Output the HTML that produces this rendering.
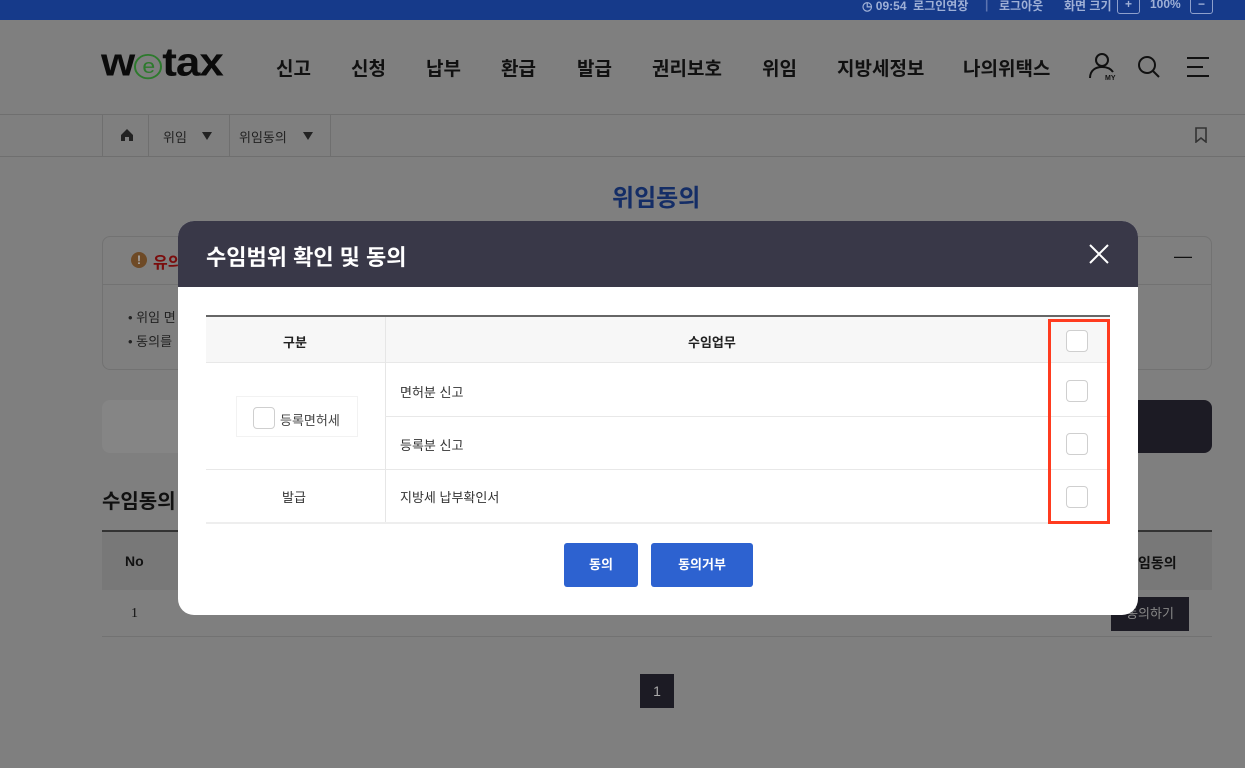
<!DOCTYPE html>
<html><head><meta charset="utf-8"><style>
*{margin:0;padding:0;box-sizing:border-box}
body{width:1245px;height:768px;overflow:hidden;background:#7f7f7f;font-family:"Liberation Sans","Noto Sans CJK KR",sans-serif;position:relative;color:#111}
.a{position:absolute}
.top{left:0;top:0;width:1245px;height:20px;background:#163a8a;color:#9fb0d6;font-size:12px;font-weight:bold}
.nav{font-size:19px;font-weight:bold;color:#111;top:54px}
.cb{position:absolute;width:22px;height:22px;border:1px solid #cfcfcf;border-radius:4px;background:#fff}
</style></head><body>
<div class="a top">
 <span class="a" style="left:862px;top:-3px">◷ 09:54 &nbsp;로그인연장</span>
 <span class="a" style="left:985px;top:-2px;color:#5c74b0">|</span>
 <span class="a" style="left:999px;top:-3px">로그아웃</span>
 <span class="a" style="left:1064px;top:-3px">화면 크기</span>
 <span class="a" style="left:1117px;top:-6px;width:23px;height:20px;border:1px solid #8ea0cc;border-radius:3px;text-align:center;line-height:18px">+</span>
 <span class="a" style="left:1150px;top:-3px">100%</span>
 <span class="a" style="left:1190px;top:-6px;width:23px;height:20px;border:1px solid #8ea0cc;border-radius:3px;text-align:center;line-height:18px">−</span>
</div>
<div class="a" style="left:0;top:114px;width:1245px;height:1px;background:#6f6f6f"></div>
<div class="a" style="left:101px;top:38px;font-size:44px;font-weight:900;letter-spacing:-1px;color:#0b0b0b;transform:scaleY(0.9)">w<span style="display:inline-block;width:28px;height:28px;border:2px solid #2d7a2d;border-radius:50%;color:#2d7a2d;font-size:23px;font-weight:normal;line-height:23px;text-align:center;vertical-align:3px">e</span>tax</div>
<span class="a nav" style="left:276px">신고</span>
<span class="a nav" style="left:351px">신청</span>
<span class="a nav" style="left:426px">납부</span>
<span class="a nav" style="left:501px">환급</span>
<span class="a nav" style="left:577px">발급</span>
<span class="a nav" style="left:652px">권리보호</span>
<span class="a nav" style="left:762px">위임</span>
<span class="a nav" style="left:837px">지방세정보</span>
<span class="a nav" style="left:963px">나의위택스</span>
<svg class="a" style="left:1088px;top:52px" width="32" height="30" fill="none" stroke="#111" stroke-width="2"><circle cx="14" cy="8" r="6"/><path d="M2 26c0-8 6-11 12-11s9 2 11 5"/><text x="17" y="28" font-size="7" fill="#111" stroke="none" font-weight="bold" font-family="Liberation Sans">MY</text></svg>
<svg class="a" style="left:1137px;top:55px" width="26" height="26" fill="none" stroke="#111" stroke-width="2"><circle cx="10" cy="10" r="8"/><path d="M16 16l6 6"/></svg>
<svg class="a" style="left:1186px;top:56px" width="24" height="22" stroke="#111" stroke-width="2"><path d="M1 2h22M1 11h16M1 20h22"/></svg>
<div class="a" style="left:0;top:156px;width:1245px;height:1px;background:#6f6f6f"></div>
<div class="a" style="left:102px;top:115px;width:229px;height:41px;border-left:1px solid #6f6f6f;border-right:1px solid #6f6f6f"></div>
<div class="a" style="left:148px;top:115px;width:1px;height:41px;background:#6f6f6f"></div>
<div class="a" style="left:229px;top:115px;width:1px;height:41px;background:#6f6f6f"></div>
<svg class="a" style="left:120px;top:128px" width="14" height="14"><path d="M7 1L1 7v6h4V9h4v4h4V7z" fill="#222"/></svg>
<span class="a" style="left:163px;top:127px;font-size:13px;color:#222">위임</span><svg class="a" style="left:202px;top:132px" width="10" height="8"><path d="M0 0h10L5 8z" fill="#222"/></svg>
<span class="a" style="left:239px;top:127px;font-size:13px;color:#222">위임동의</span><svg class="a" style="left:303px;top:132px" width="10" height="8"><path d="M0 0h10L5 8z" fill="#222"/></svg>
<svg class="a" style="left:1194px;top:127px" width="14" height="16" fill="none" stroke="#333" stroke-width="1.6"><path d="M2 1h10v14l-5-4-5 4z"/></svg>
<span class="a" style="left:612px;top:178px;font-size:24px;font-weight:bold;color:#142d66">위임동의</span>
<div class="a" style="left:102px;top:236px;width:1110px;height:134px;border:1px solid #727272;border-radius:8px"></div>
<div class="a" style="left:102px;top:284px;width:1110px;height:1px;background:#727272"></div>
<span class="a" style="left:131px;top:252px;width:16px;height:16px;border-radius:50%;background:#6e4a26;color:#aaa;font-size:12px;text-align:center;line-height:16px;font-weight:bold">!</span>
<span class="a" style="left:153px;top:249px;font-size:16px;font-weight:bold;color:#7a0d0d">유의</span>
<span class="a" style="left:1174px;top:246px;font-size:18px;color:#111">—</span>
<span class="a" style="left:128px;top:307px;font-size:13px;color:#222">• 위임 면</span>
<span class="a" style="left:128px;top:331px;font-size:13px;color:#222">• 동의를</span>
<div class="a" style="left:102px;top:400px;width:1110px;height:53px;border-radius:8px;background:linear-gradient(90deg,#858585 0%,#858585 80%,#1c1b24 93%)"></div>
<span class="a" style="left:102px;top:485px;font-size:20px;font-weight:bold;color:#111">수임동의</span>
<div class="a" style="left:102px;top:530px;width:1110px;height:2px;background:#333"></div>
<div class="a" style="left:102px;top:532px;width:1110px;height:58px;background:#787878"></div>
<div class="a" style="left:102px;top:636px;width:1110px;height:1px;background:#727272"></div>
<span class="a" style="left:125px;top:553px;font-size:14px;font-weight:bold">No</span>
<span class="a" style="left:1138px;top:553px;font-size:14px;font-weight:bold">임동의</span>
<span class="a" style="left:131px;top:606px;font-size:14px;font-family:'Liberation Serif',serif">1</span>
<div class="a" style="left:1111px;top:597px;width:78px;height:34px;background:#1c1b24;color:#888;font-size:13px;text-align:center;line-height:34px">동의하기</div>
<div class="a" style="left:640px;top:674px;width:34px;height:34px;background:#1c1b24;color:#aaa;font-size:14px;text-align:center;line-height:34px">1</div>

<div class="a" style="left:178px;top:221px;width:960px;height:394px;background:#fff;border-radius:16px;overflow:hidden">
 <div style="height:66px;background:#393848;color:#fff;font-size:22px;font-weight:bold;padding:19px 0 0 28px">수임범위 확인 및 동의</div>
 <svg class="a" style="left:911px;top:23px" width="20" height="20" stroke="#fff" stroke-width="2"><path d="M1 1l18 18M19 1L1 19"/></svg>
 <div class="a" style="left:28px;top:94px;width:904px;height:2px;background:#666"></div>
 <div class="a" style="left:28px;top:96px;width:904px;height:46px;background:#f7f7f7;border-bottom:1px solid #e8e8e8"></div>
 <div class="a" style="left:207px;top:96px;width:1px;height:206px;background:#e6e6e6"></div>
 <div class="a" style="left:207px;top:195px;width:725px;height:1px;background:#e8e8e8"></div>
 <div class="a" style="left:28px;top:248px;width:904px;height:1px;background:#e8e8e8"></div>
 <div class="a" style="left:28px;top:301px;width:904px;height:2px;background:#eee"></div>
 <span class="a" style="left:105px;top:111px;font-size:13px;font-weight:bold;color:#222">구분</span>
 <span class="a" style="left:510px;top:111px;font-size:13px;font-weight:bold;color:#222">수임업무</span>
 <div class="a" style="left:58px;top:175px;width:122px;height:41px;border:1px solid #f2f2f2"></div>
 <div class="cb" style="left:75px;top:186px"></div>
 <span class="a" style="left:102px;top:189px;font-size:13px;color:#444">등록면허세</span>
 <span class="a" style="left:222px;top:161px;font-size:13px;color:#333">면허분 신고</span>
 <span class="a" style="left:222px;top:214px;font-size:13px;color:#333">등록분 신고</span>
 <span class="a" style="left:104px;top:266px;font-size:13px;color:#333">발급</span>
 <span class="a" style="left:222px;top:266px;font-size:13px;color:#333">지방세 납부확인서</span>
 <div class="a" style="left:870px;top:98px;width:62px;height:205px;border:3px solid #ff3b1f"></div>
 <div class="cb" style="left:888px;top:109px"></div>
 <div class="cb" style="left:888px;top:159px"></div>
 <div class="cb" style="left:888px;top:212px"></div>
 <div class="cb" style="left:888px;top:265px"></div>
 <div class="a" style="left:386px;top:322px;width:74px;height:44px;background:#2d62d0;border-radius:3px;color:#fff;font-size:13px;font-weight:bold;text-align:center;line-height:44px">동의</div>
 <div class="a" style="left:473px;top:322px;width:102px;height:44px;background:#2d62d0;border-radius:3px;color:#fff;font-size:13px;font-weight:bold;text-align:center;line-height:44px">동의거부</div>
</div>
</body></html>
